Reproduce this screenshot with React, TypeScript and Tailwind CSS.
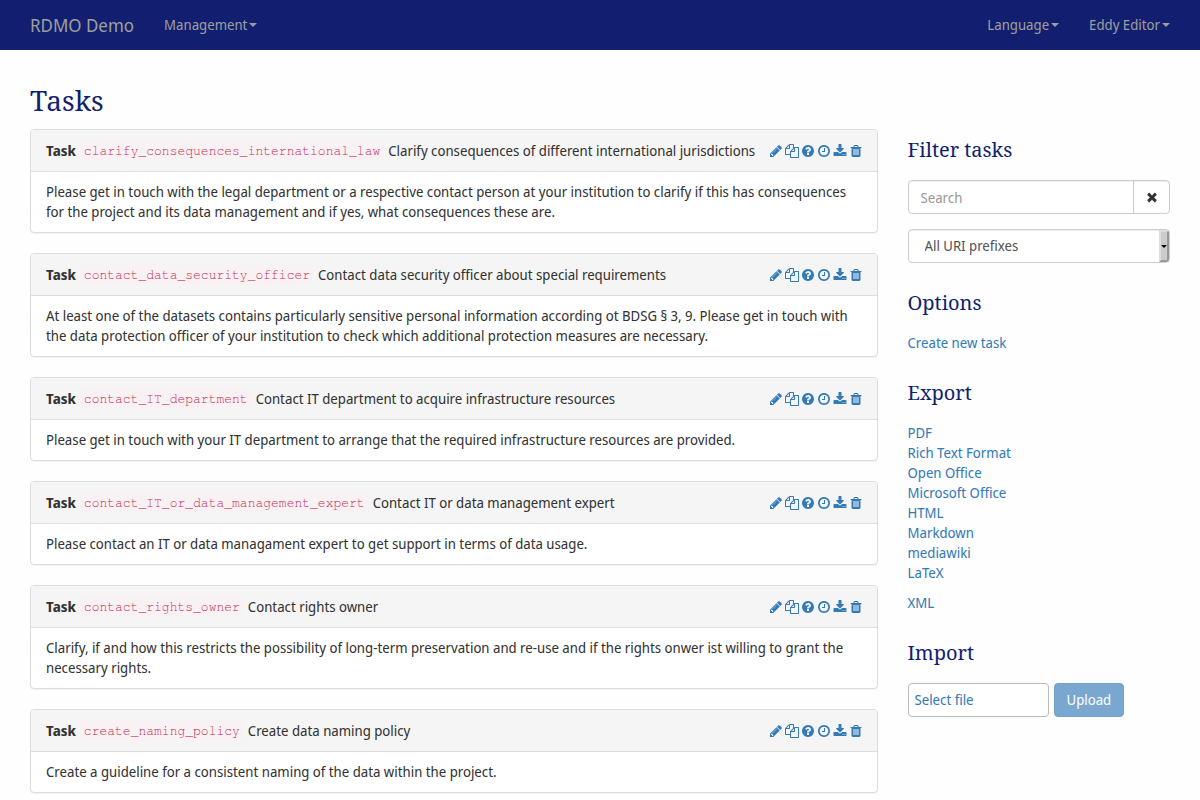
import type { ReactNode } from "react";

type Task = { id: string; title: string; text: string };

const tasks: Task[] = [
  {
    id: "clarify_consequences_international_law",
    title: "Clarify consequences of different international jurisdictions",
    text: "Please get in touch with the legal department or a respective contact person at your institution to clarify if this has consequences for the project and its data management and if yes, what consequences these are.",
  },
  {
    id: "contact_data_security_officer",
    title: "Contact data security officer about special requirements",
    text: "At least one of the datasets contains particularly sensitive personal information according ot BDSG § 3, 9. Please get in touch with the data protection officer of your institution to check which additional protection measures are necessary.",
  },
  {
    id: "contact_IT_department",
    title: "Contact IT department to acquire infrastructure resources",
    text: "Please get in touch with your IT department to arrange that the required infrastructure resources are provided.",
  },
  {
    id: "contact_IT_or_data_management_expert",
    title: "Contact IT or data management expert",
    text: "Please contact an IT or data managament expert to get support in terms of data usage.",
  },
  {
    id: "contact_rights_owner",
    title: "Contact rights owner",
    text: "Clarify, if and how this restricts the possibility of long-term preservation and re-use and if the rights onwer ist willing to grant the necessary rights.",
  },
  {
    id: "create_naming_policy",
    title: "Create data naming policy",
    text: "Create a guideline for a consistent naming of the data within the project.",
  },
];

const circle =
  "m384 192q0 209-103 385.5t-279.5 279.5-385.5 103-385.5-103-279.5-279.5-103-385.5 103-385.5 279.5-279.5 385.5-103 385.5 103 279.5 279.5 103 385.5z";

const actions = [
  {
    label: "Edit task",
    d: "M491 1536l91-91-235-235-91 91v107h128v128h107zm523-928q0-22-22-22-10 0-17 7l-542 542q-7 7-7 17 0 22 22 22 10 0 17-7l542-542q7-7 7-17zm-54-192l416 416-832 832h-416v-416zm683 96q0 53-37 90l-166 166-416-416 166-165q36-38 90-38 53 0 91 38l235 234q37 39 37 91z",
  },
  {
    label: "Copy task",
    d: "M1696 384q40 0 68 28t28 68v1216q0 40-28 68t-68 28h-960q-40 0-68-28t-28-68v-288h-544q-40 0-68-28t-28-68v-672q0-40 20-88t48-76l408-408q28-28 76-48t88-20h416q40 0 68 28t28 68v328q68-40 128-40h416zm-544 213l-299 299h299v-299zm-640-384l-299 299h299v-299zm196 647l316-316v-416h-384v416q0 40-28 68t-68 28h-416v640h512v-256q0-40 20-88t48-76zm956 804v-1152h-384v416q0 40-28 68t-68 28h-416v640h896z",
  },
  {
    label: "Edit conditions",
    d:
      "M1024 1376v-192q0-14-9-23t-23-9h-192q-14 0-23 9t-9 23v192q0 14 9 23t23 9h192q14 0 23-9t9-23zm256-672q0-88-55.5-163t-138.5-116-170-41q-243 0-371 213-15 24 8 42l132 100q7 6 19 6 16 0 25-12 53-68 86-92 34-24 86-24 48 0 85.5 26t37.5 59q0 38-20 61t-68 45q-63 28-115.5 86.5t-52.5 125.5v36q0 14 9 23t23 9h192q14 0 23-9t9-23q0-19 21.5-49.5t54.5-49.5q32-18 49-28.5t46-35 44.5-48 28-60.5 12.5-81z" +
      circle,
  },
  {
    label: "Edit time frame",
    d: "M1024 544v448q0 14-9 23t-23 9h-320q-14 0-23-9t-9-23v-64q0-14 9-23t23-9h224v-352q0-14 9-23t23-9h64q14 0 23 9t9 23zm416 352q0-148-73-273t-198-198-273-73-273 73-198 198-73 273 73 273 198 198 273 73 273-73 198-198 73-273zm224 0q0 209-103 385.5t-279.5 279.5-385.5 103-385.5-103-279.5-279.5-103-385.5 103-385.5 279.5-279.5 385.5-103 385.5 103 279.5 279.5 103 385.5z",
  },
  {
    label: "Export task",
    d: "M1344 1344q0-26-19-45t-45-19-45 19-19 45 19 45 45 19 45-19 19-45zm256 0q0-26-19-45t-45-19-45 19-19 45 19 45 45 19 45-19 19-45zm128-224v320q0 40-28 68t-68 28h-1472q-40 0-68-28t-28-68v-320q0-40 28-68t68-28h465l135 136q58 56 136 56t136-56l136-136h464q40 0 68 28t28 68zm-325-569q17 41-14 70l-448 448q-18 19-45 19t-45-19l-448-448q-31-29-14-70 17-39 59-39h256v-448q0-26 19-45t45-19h256q26 0 45 19t19 45v448h256q42 0 59 39z",
  },
  {
    label: "Delete task",
    d: "M704 1376v-704q0-14-9-23t-23-9h-64q-14 0-23 9t-9 23v704q0 14 9 23t23 9h64q14 0 23-9t9-23zm256 0v-704q0-14-9-23t-23-9h-64q-14 0-23 9t-9 23v704q0 14 9 23t23 9h64q14 0 23-9t9-23zm256 0v-704q0-14-9-23t-23-9h-64q-14 0-23 9t-9 23v704q0 14 9 23t23 9h64q14 0 23-9t9-23zm-544-992h448l-48-117q-7-9-17-11h-317q-10 2-17 11zm928 32v64q0 14-9 23t-23 9h-96v948q0 83-47 143.5t-113 60.5h-832q-66 0-113-58.5t-47-141.5v-952h-96q-14 0-23-9t-9-23v-64q0-14 9-23t23-9h309l70-167q15-37 54-63t79-26h320q40 0 79 26t54 63l70 167h309q14 0 23 9t9 23z",
  },
];

const times =
  "M1490 1322q0 40-28 68l-136 136q-28 28-68 28t-68-28l-294-294-294 294q-28 28-68 28t-68-28l-136-136q-28-28-28-68t28-68l294-294-294-294q-28-28-28-68t28-68l136-136q28-28 68-28t68 28l294 294 294-294q28-28 68-28t68 28l136 136q28 28 28 68t-28 68l-294 294 294 294q28 28 28 68z";

const exportFormats = [
  "PDF",
  "Rich Text Format",
  "Open Office",
  "Microsoft Office",
  "HTML",
  "Markdown",
  "mediawiki",
  "LaTeX",
];

function Icon({ d }: { d: string }) {
  return (
    <svg viewBox="0 0 1792 1792" className="size-3.5 fill-current" aria-hidden="true">
      <path d={d} />
    </svg>
  );
}

function NavMenu({ children }: { children: ReactNode }) {
  return (
    <button type="button" className="flex items-center gap-0.5 px-[15px] py-[15px]">
      {children}
      <svg viewBox="0 0 8 4" className="h-1 w-2 fill-current" aria-hidden="true">
        <path d="M0 0h8l-4 4z" />
      </svg>
    </button>
  );
}

function Heading({ children }: { children: ReactNode }) {
  return (
    <h2 className="mb-5 font-['Noto_Serif','Liberation_Serif',serif] text-xl leading-5 text-[#121f70]">
      {children}
    </h2>
  );
}

function TaskCard({ task }: { task: Task }) {
  return (
    <article className="mb-5 rounded border border-[#ddd] bg-white shadow-[0_1px_1px_rgba(0,0,0,0.05)]">
      <header className="flex items-center justify-between gap-2 rounded-t-[3px] border-b border-[#ddd] bg-[#f5f5f5] py-2.5 pr-3.5 pl-[15px]">
        <h3 className="flex flex-wrap items-center gap-x-1">
          <strong className="font-bold">Task</strong>
          <code className="rounded bg-[#f9f2f4] px-1 pt-0.5 font-['FreeMono','Liberation_Mono',monospace] text-[13px] leading-[19px] text-[#c7254e]">
            {task.id}
          </code>
          <span>{task.title}</span>
        </h3>
        <div className="flex gap-0.5 text-[#337ab7]">
          {actions.map((a) => (
            <button key={a.label} type="button" aria-label={a.label}>
              <Icon d={a.d} />
            </button>
          ))}
        </div>
      </header>
      <p className="px-[15px] py-2.5">{task.text}</p>
    </article>
  );
}

export default function App() {
  return (
    <div className="min-h-screen bg-[#fefefe] font-['Noto_Sans_Display','Noto_Sans',sans-serif] text-sm leading-5 text-[#333]">
      <nav className="flex h-[50px] items-center justify-between bg-[#121f70] px-[15px] text-[#9d9d9d]">
        <div className="flex items-center">
          <a href="#home" className="px-[15px] text-lg leading-5">
            RDMO Demo
          </a>
          <NavMenu>Management</NavMenu>
        </div>
        <div className="flex items-center">
          <NavMenu>Language</NavMenu>
          <NavMenu>Eddy Editor</NavMenu>
        </div>
      </nav>

      <div className="flex px-[15px] pt-8">
        <main className="w-3/4 px-[15px]">
          <h1 className="mb-[11px] font-['Noto_Serif','Liberation_Serif',serif] text-[28px] leading-9 text-[#121f70]">
            Tasks
          </h1>
          {tasks.map((t) => (
            <TaskCard key={t.id} task={t} />
          ))}
        </main>

        <aside className="flex w-1/4 flex-col gap-[30px] px-[15px] pt-[58px]">
          <section>
            <Heading>Filter tasks</Heading>
            <div className="flex rounded border border-[#ccc] bg-white shadow-[inset_0_1px_1px_rgba(0,0,0,0.075)]">
              <input
                type="text"
                aria-label="Search"
                placeholder="Search"
                className="h-8 w-full min-w-0 px-3 placeholder:text-[#999]"
              />
              <button
                type="button"
                aria-label="Clear search"
                className="flex h-8 w-9 shrink-0 items-center justify-center border-l border-[#ccc]"
              >
                <Icon d={times} />
              </button>
            </div>
            <div className="relative mt-[15px]">
              <select
                aria-label="URI prefix"
                className="block h-[34px] w-full appearance-none rounded border border-[#ccc] bg-white px-4 text-[#555] shadow-[inset_0_1px_1px_rgba(0,0,0,0.075)]"
              >
                <option>All URI prefixes</option>
              </select>
              <span className="pointer-events-none absolute inset-y-px right-px flex w-2.5 items-center justify-center rounded-r-[3px] border-2 border-t-[#ddd] border-r-[#999] border-b-[#999] border-l-[#ddd] bg-[#ccc]">
                <svg viewBox="0 0 6 3" className="h-[3px] w-1.5 shrink-0" aria-hidden="true">
                  <path d="M0 0h6l-3 3z" />
                </svg>
              </span>
            </div>
          </section>

          <section className="text-[#337ab7]">
            <Heading>Options</Heading>
            <a href="#create" className="block">
              Create new task
            </a>
          </section>

          <section className="text-[#337ab7]">
            <Heading>Export</Heading>
            <ul>
              {exportFormats.map((f) => (
                <li key={f}>
                  <a href="#export">{f}</a>
                </li>
              ))}
            </ul>
            <a href="#xml" className="mt-2.5 block">
              XML
            </a>
          </section>

          <section>
            <Heading>Import</Heading>
            <form className="flex gap-[5px]">
              <label className="h-[34px] w-[141px] cursor-pointer rounded border border-[#bbb] bg-white px-1.5 py-1.5 text-[#337ab7]">
                Select file
                <input type="file" className="sr-only" />
              </label>
              <button
                type="submit"
                disabled
                className="h-[34px] rounded border border-[#2e6da4] bg-[#337ab7] px-3 text-white opacity-65"
              >
                Upload
              </button>
            </form>
          </section>
        </aside>
      </div>
    </div>
  );
}
